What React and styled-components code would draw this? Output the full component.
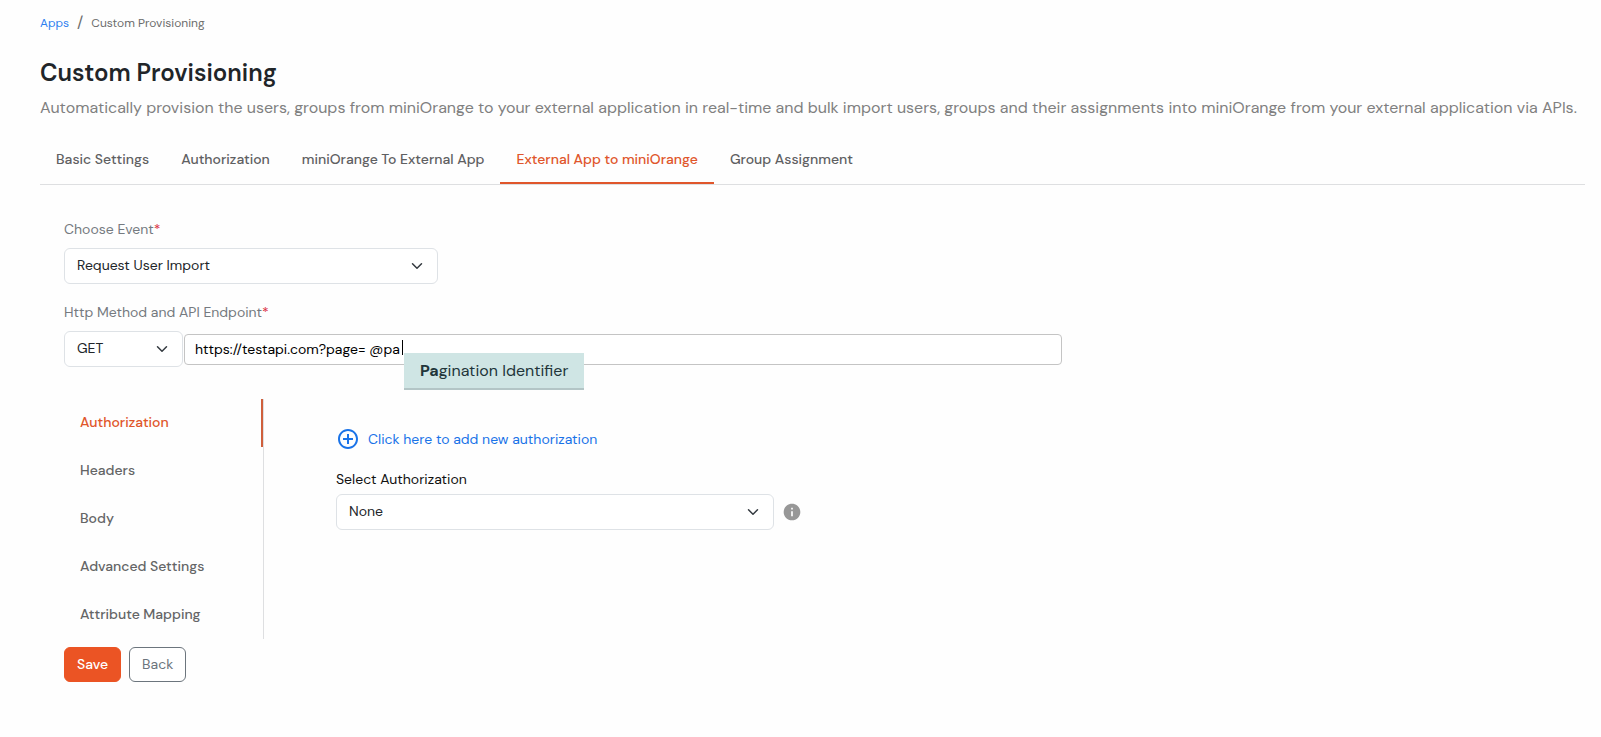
import React, { useState } from "react";
import styled, { createGlobalStyle } from "styled-components";

//----------- styles ------------

const GlobalStyle = createGlobalStyle`
  * {
    box-sizing: border-box;
  }

  body {
    margin: 0;
    background: #fefefe;
    color: #212529;
    font-family: "DM Sans", Inter, "Open Sans", sans-serif;
    font-size: 14px;
    line-height: 20px;
  }

  button,
  input,
  select {
    font: inherit;
    color: inherit;
  }
`;

const Page = styled.main`
  padding: 13px 16px 48px 40px;
`;

const Breadcrumb = styled.nav`
  display: flex;
  align-items: center;
  gap: 8px;
  font-size: 12px;
  color: #6c6c6c;

  a {
    color: #2d7ff0;
    text-decoration: none;
  }
`;

const Slash = styled.span`
  font-size: 16px;
`;

const Title = styled.h1`
  margin: 24px 0 0;
  font-size: 24px;
  line-height: 32px;
  font-weight: 600;
`;

const Subtitle = styled.p`
  margin: 7px 0 0;
  font-size: 16px;
  line-height: 24px;
  color: #808080;
`;

const Tabs = styled.div`
  display: flex;
  margin-top: 16px;
  border-bottom: 1px solid #dedfe1;
`;

const Tab = styled.button`
  height: 48px;
  padding: 0 16px;
  border: 0;
  border-bottom: 2px solid ${({ $active }) => ($active ? "#e0562b" : "transparent")};
  background: none;
  color: ${({ $active }) => ($active ? "#e0562b" : "#5f6062")};
  font-weight: 500;
  white-space: nowrap;
`;

const Form = styled.form`
  padding: 34px 24px 0;
`;

const Label = styled.label`
  display: block;
  margin-bottom: ${({ $dark }) => ($dark ? "5px" : "9px")};
  color: ${({ $dark }) => ($dark ? "#111" : "#757a80")};

  span {
    color: #dc3545;
  }
`;

const SelectBox = styled.div`
  display: grid;
  align-items: center;
  width: ${({ $width }) => $width};

  select,
  svg {
    grid-area: 1 / 1;
  }

  select {
    appearance: none;
    width: 100%;
    height: 36px;
    padding: 0 36px 2px 12px;
    border: 1px solid #dee2e6;
    border-radius: 6px;
    background: #fff;
  }

  svg {
    justify-self: end;
    margin-right: 15px;
    pointer-events: none;
  }
`;

const Endpoint = styled.div`
  display: flex;
  align-items: center;
  gap: 1px;
  width: calc(100% * 2 / 3);
  margin-bottom: 32px;
`;

const Field = styled.div`
  margin-bottom: 18px;
`;

const UrlBox = styled.div`
  position: relative;
  flex: 1;
`;

const UrlInput = styled.input`
  display: block;
  width: 100%;
  height: 31px;
  padding: 0 10px;
  border: 1px solid #c4c4c4;
  border-radius: 4px;
  background: #fff;
  color: #000;
  outline: none;
`;

const Caret = styled.span`
  position: absolute;
  top: 6px;
  left: 218px;
  width: 1px;
  height: 15px;
  background: #000;
`;

const Suggestions = styled.ul`
  position: absolute;
  top: 19px;
  left: 220px;
  margin: 0;
  padding: 0;
  list-style: none;
`;

const Suggestion = styled.li`
  height: 37px;
  padding: 0 16px;
  border-bottom: 2px solid #b3c5c6;
  background: #cfe5e4;
  color: #22353a;
  font-size: 16px;
  line-height: 35px;
  white-space: nowrap;
`;

const Panel = styled.div`
  display: flex;
`;

const SideNav = styled.div`
  display: flex;
  flex-direction: column;
  width: 200px;
  border-right: 1px solid #dedfe1;
`;

const SideItem = styled.button`
  height: 48px;
  padding: 0 16px 2px;
  border: 0;
  border-right: 2px solid ${({ $active }) => ($active ? "#cf5f3c" : "transparent")};
  background: none;
  color: ${({ $active }) => ($active ? "#e0562b" : "#646566")};
  font-weight: 500;
  text-align: left;
`;

const AuthArea = styled.div`
  flex: 1;
  padding: 28px 0 0 72px;
`;

const AddLink = styled.a`
  display: inline-flex;
  align-items: center;
  gap: 8px;
  margin-bottom: 18px;
  color: #1a73e8;
  text-decoration: none;
`;

const SelectRow = styled.div`
  display: flex;
  align-items: center;
  gap: 8px;
`;

const Actions = styled.div`
  display: flex;
  gap: 8px;
  margin-top: 8px;
`;

const Button = styled.button`
  height: 35px;
  padding: 0 12px 2px;
  border: 1px solid ${({ $primary }) => ($primary ? "#eb5424" : "#6c757d")};
  border-radius: 6px;
  background: ${({ $primary }) => ($primary ? "#eb5424" : "#fff")};
  color: ${({ $primary }) => ($primary ? "#fff" : "#6c757d")};
  font-weight: ${({ $primary }) => ($primary ? 500 : 400)};
`;

//----------- icons ------------

const Chevron = () => (
  <svg width="12" height="12" viewBox="0 0 16 16" fill="none" stroke="#343a40" strokeWidth="2" strokeLinecap="round" strokeLinejoin="round">
    <path d="m2 5 6 6 6-6" />
  </svg>
);

const PlusCircle = () => (
  <svg width="24" height="24" viewBox="0 0 24 24" fill="#1a73e8">
    <path d="M13 7h-2v4H7v2h4v4h2v-4h4v-2h-4V7zm-1-5C6.48 2 2 6.48 2 12s4.48 10 10 10 10-4.48 10-10S17.52 2 12 2zm0 18c-4.41 0-8-3.59-8-8s3.59-8 8-8 8 3.59 8 8-3.59 8-8 8z" />
  </svg>
);

const InfoIcon = () => (
  <svg width="20" height="20" viewBox="0 0 24 24" fill="#979797">
    <path d="M12 2C6.48 2 2 6.48 2 12s4.48 10 10 10 10-4.48 10-10S17.52 2 12 2zm1 15h-2v-6h2v6zm0-8h-2V7h2v2z" />
  </svg>
);

//----------- components ------------

const tabs = [
  "Basic Settings",
  "Authorization",
  "miniOrange To External App",
  "External App to miniOrange",
  "Group Assignment",
];

const sections = ["Authorization", "Headers", "Body", "Advanced Settings", "Attribute Mapping"];

function Select({ id, width, options, ...props }) {
  return (
    <SelectBox $width={width}>
      <select id={id} {...props}>
        {options.map((option) => (
          <option key={option}>{option}</option>
        ))}
      </select>
      <Chevron />
    </SelectBox>
  );
}

const App = () => {
  const [tab, setTab] = useState(tabs[3]);
  const [section, setSection] = useState(sections[0]);
  const [url, setUrl] = useState("https://testapi.com?page= @pa");

  return (
    <>
      <GlobalStyle />
      <Page>
        <Breadcrumb>
          <a href="#apps">Apps</a>
          <Slash>/</Slash>
          <span>Custom Provisioning</span>
        </Breadcrumb>
        <Title>Custom Provisioning</Title>
        <Subtitle>
          Automatically provision the users, groups from miniOrange to your external application in
          real-time and bulk import users, groups and their assignments into miniOrange from your
          external application via APIs.
        </Subtitle>

        <Tabs>
          {tabs.map((name) => (
            <Tab key={name} type="button" $active={name === tab} onClick={() => setTab(name)}>
              {name}
            </Tab>
          ))}
        </Tabs>

        <Form onSubmit={(e) => e.preventDefault()}>
          <Field>
            <Label htmlFor="event">
              Choose Event<span>*</span>
            </Label>
            <Select id="event" width="374px" options={["Request User Import"]} />
          </Field>

          <Label htmlFor="endpoint">
            Http Method and API Endpoint<span>*</span>
          </Label>
          <Endpoint>
            <Select id="method" aria-label="Http Method" width="119px" options={["GET", "POST"]} />
            <UrlBox>
              <UrlInput
                id="endpoint"
                type="text"
                value={url}
                onChange={(e) => setUrl(e.target.value)}
              />
              <Caret />
              <Suggestions>
                <Suggestion>
                  <b>Pa</b>gination Identifier
                </Suggestion>
              </Suggestions>
            </UrlBox>
          </Endpoint>

          <Panel>
            <SideNav>
              {sections.map((name) => (
                <SideItem
                  key={name}
                  type="button"
                  $active={name === section}
                  onClick={() => setSection(name)}
                >
                  {name}
                </SideItem>
              ))}
            </SideNav>
            <AuthArea>
              <AddLink href="#new-authorization">
                <PlusCircle />
                Click here to add new authorization
              </AddLink>
              <Label htmlFor="authorization" $dark>
                Select Authorization
              </Label>
              <SelectRow>
                <Select id="authorization" width="438px" options={["None"]} />
                <InfoIcon />
              </SelectRow>
            </AuthArea>
          </Panel>

          <Actions>
            <Button type="submit" $primary>
              Save
            </Button>
            <Button type="button">Back</Button>
          </Actions>
        </Form>
      </Page>
    </>
  );
};

export default App;
